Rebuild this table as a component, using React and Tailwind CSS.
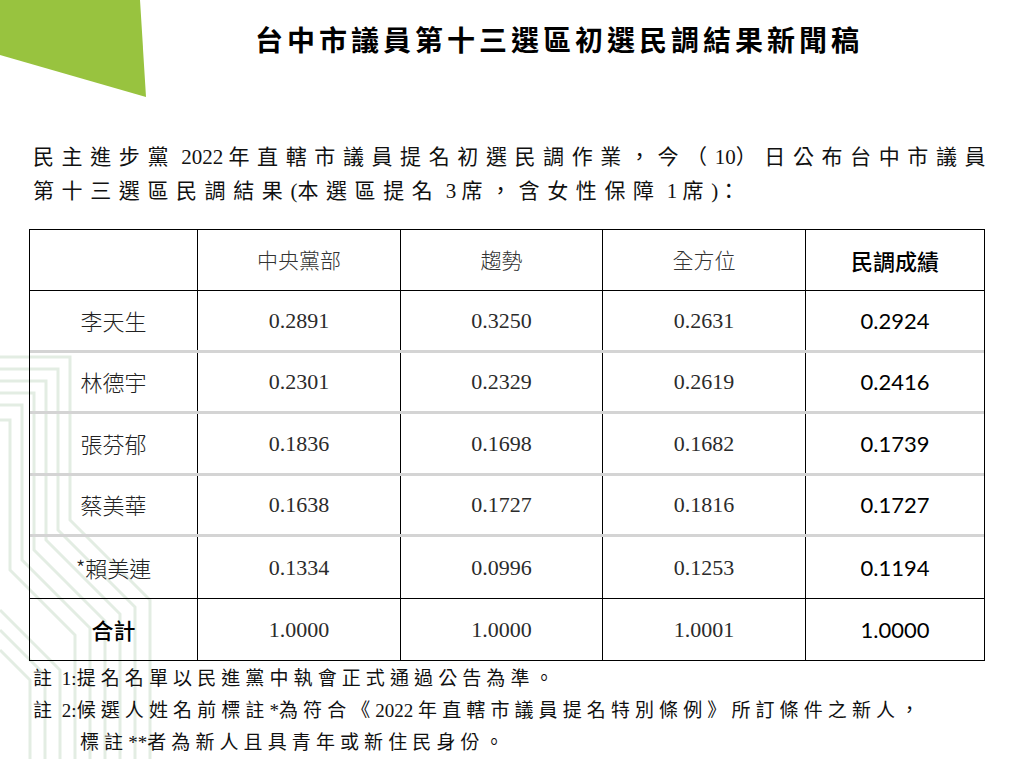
const cjkSans = '"Noto Sans CJK TC", "Noto Sans", sans-serif';
const cjkSerif = '"Liberation Serif", "Noto Sans CJK TC", serif';

const rows = [
  { name: "李天生", a: "0.2891", b: "0.3250", c: "0.2631", s: "0.2924" },
  { name: "林德宇", a: "0.2301", b: "0.2329", c: "0.2619", s: "0.2416" },
  { name: "張芬郁", a: "0.1836", b: "0.1698", c: "0.1682", s: "0.1739" },
  { name: "蔡美華", a: "0.1638", b: "0.1727", c: "0.1816", s: "0.1727" },
  { name: "*賴美連", a: "0.1334", b: "0.0996", c: "0.1253", s: "0.1194" },
];

// ASCII runs keep normal spacing, CJK gets the wide tracking
function Mixed({ text }) {
  return text.split(/([\x20-\x7e]+)/).map((part, i) =>
    /^[\x20-\x7e]+$/.test(part) ? (
      <span key={i} className="tracking-normal">
        {part}
      </span>
    ) : (
      <span key={i}>{part}</span>
    )
  );
}

function Backdrop() {
  return (
    <svg className="absolute inset-0 pointer-events-none" width="1036" height="759" viewBox="0 0 1036 759">
      {/* faint circuit lines bottom-left */}
      <g fill="none" stroke="#e3ede3" strokeWidth="3">
        <path d="M0 357 H70 V520 L150 600 V759" />
        <path d="M0 369 H58 V530 L135 607 V759" />
        <path d="M0 381 H46 V540 L120 614 V759" />
        <path d="M0 393 H34 V550 L105 621 V759" />
        <path d="M0 405 H22 V560 L90 628 V759" />
        <path d="M0 420 H10 V570 L75 635 V759" />
        <path d="M0 610 L60 670 V759" />
        <path d="M0 630 L45 675 V759" />
        <path d="M0 650 L30 680 V759" />
      </g>
      <polygon points="0,0 140,0 146,97 0,55" fill="#98c33f" />
    </svg>
  );
}

const widths = [168, 203, 202, 203, 178];

function Cell({ children, w, last }) {
  return (
    <div
      className={`flex items-center justify-center h-full ${last ? "" : "border-r border-black"}`}
      style={{ width: w }}
    >
      {children}
    </div>
  );
}

function Row({ cells, className = "" }) {
  return (
    <div className={`flex h-[61.5px] ${className}`}>
      {cells.map((c, i) => (
        <Cell key={i} w={widths[i]} last={i === cells.length - 1}>
          {c}
        </Cell>
      ))}
    </div>
  );
}

export default function App() {
  const num = (v) => (
    <span className="text-[22px] text-[#2b2b2b]" style={{ fontFamily: '"Liberation Serif", serif' }}>
      {v}
    </span>
  );
  const score = (v) => (
    <span className="text-[22px] text-black" style={{ fontFamily: 'Lato, "Liberation Sans", sans-serif' }}>
      {v}
    </span>
  );
  const name = (v) => (
    <span className="text-[22px] font-light text-[#222]" style={{ fontFamily: cjkSans }}>
      {v}
    </span>
  );

  return (
    <div className="relative w-[1036px] h-[759px] overflow-hidden bg-white">
      <Backdrop />

      <div className="relative">
        {/* 標題 */}
        <h1
          className="pl-[255px] pt-[22px] text-[28px] font-bold leading-[34px] tracking-[4px] text-black"
          style={{ fontFamily: cjkSans }}
        >
          台中市議員第十三選區初選民調結果新聞稿
        </h1>

        {/* 內文 */}
        <p
          className="mt-[84px] pl-[33px] text-[21px] leading-[34px] tracking-[7.6px] text-[#111]"
          style={{ fontFamily: cjkSerif }}
        >
          <Mixed text="民主進步黨 2022 年直轄市議員提名初選民調作業，今（10）日公布台中市議員" />
          <br />
          <Mixed text="第十三選區民調結果(本選區提名 3 席，含女性保障 1 席)：" />
        </p>

        {/* 民調表 */}
        <div className="ml-[29px] mt-[21px] w-[956px] border border-black">
          <div className="flex h-[61px] border-b border-black">
            {["", "中央黨部", "趨勢", "全方位", "民調成績"].map((h, i) => (
              <Cell key={i} w={widths[i]} last={i === 4}>
                <span
                  className={
                    i === 4 ? "text-[22px] font-medium text-black" : "text-[21px] font-light text-[#333]"
                  }
                  style={{ fontFamily: cjkSans }}
                >
                  {h}
                </span>
              </Cell>
            ))}
          </div>

          {rows.map((r, idx) => (
            <Row
              key={r.name}
              className={idx < 4 ? "border-b-[3px] border-[#d4d4d4]" : "border-b border-black"}
              cells={[name(r.name), num(r.a), num(r.b), num(r.c), score(r.s)]}
            />
          ))}

          <Row
            cells={[
              <span className="text-[22px] font-medium text-black" style={{ fontFamily: cjkSans }}>
                合計
              </span>,
              num("1.0000"),
              num("1.0000"),
              num("1.0001"),
              score("1.0000"),
            ]}
          />
        </div>

        {/* 註解 */}
        <div
          className="pl-[33px] pt-[2px] text-[19px] leading-[32px] tracking-[5.1px] text-[#111]"
          style={{ fontFamily: cjkSerif }}
        >
          <div>
            <Mixed text="註 1:提名名單以民進黨中執會正式通過公告為準。" />
          </div>
          <div>
            <Mixed text="註 2:候選人姓名前標註*為符合《2022 年直轄市議員提名特別條例》所訂條件之新人，" />
          </div>
          <div className="pl-[47px]">
            <Mixed text="標註**者為新人且具青年或新住民身份。" />
          </div>
        </div>
      </div>
    </div>
  );
}
